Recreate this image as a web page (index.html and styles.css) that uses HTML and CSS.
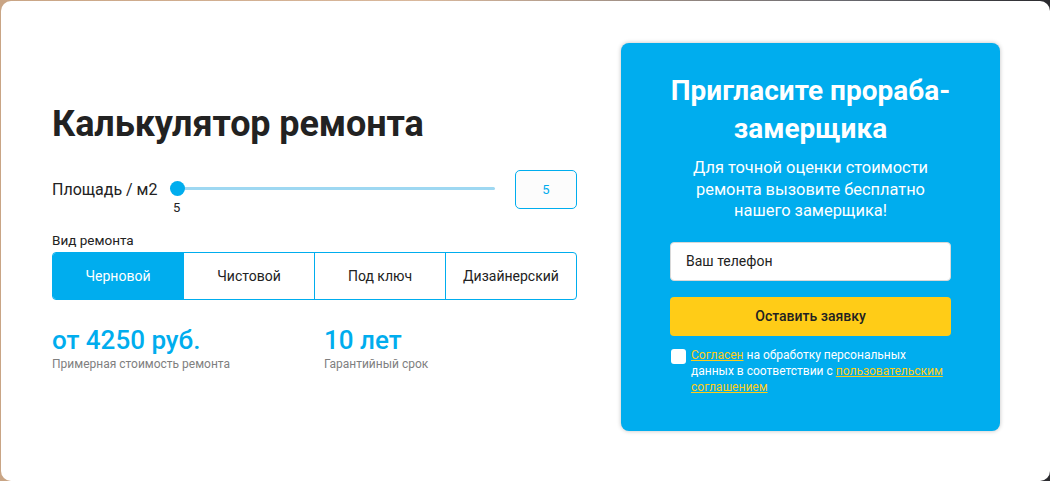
FILE: index.html
```html
<!DOCTYPE html>
<html lang="ru">
<head>
<meta charset="utf-8">
<title>Калькулятор ремонта</title>
<link rel="stylesheet" href="styles.css">
</head>
<body>
<div class="card">
  <section class="calc">
    <h1 class="calc-title">Калькулятор ремонта</h1>
    <div class="area-row">
      <span class="area-label">Площадь / м2</span>
      <div class="slider">
        <div class="track"></div>
        <div class="thumb"></div>
        <span class="thumb-value">5</span>
      </div>
      <div class="area-input">5</div>
    </div>
    <div class="type-label">Вид ремонта</div>
    <div class="segments">
      <div class="seg active">Черновой</div>
      <div class="seg">Чистовой</div>
      <div class="seg">Под ключ</div>
      <div class="seg">Дизайнерский</div>
    </div>
    <div class="results">
      <div class="result result-price">
        <div class="result-value">от 4250 руб.</div>
        <div class="result-caption">Примерная стоимость ремонта</div>
      </div>
      <div class="result">
        <div class="result-value">10 лет</div>
        <div class="result-caption">Гарантийный срок</div>
      </div>
    </div>
  </section>
  <aside class="panel">
    <h2 class="panel-title">Пригласите прораба-замерщика</h2>
    <p class="panel-text">Для точной оценки стоимости ремонта вызовите бесплатно нашего замерщика!</p>
    <div class="phone">Ваш телефон</div>
    <div class="submit">Оставить заявку</div>
    <div class="agree">
      <span class="checkbox"></span>
      <span class="agree-text"><a class="link">Согласен</a> на обработку персональных данных в соответствии с <a class="link">пользовательским соглашением</a></span>
    </div>
  </aside>
</div>
</body>
</html>
```
FILE: styles.css
```css
html, body {
  margin: 0;
  height: 100%;
}
body {
  background: linear-gradient(90deg, #c9a585 0%, #d9b89c 40%, #6a6a70 80%, #2a2a2e 100%);
  font-family: Roboto, "Noto Sans", sans-serif;
  color: #222;
  overflow: hidden;
}
.card {
  box-sizing: border-box;
  height: 480px;
  margin: 1px 0 0 1px;
  background: #fff;
  border-radius: 10px;
  display: flex;
  align-items: flex-start;
  padding: 42px 50px 0 51px;
  gap: 44px;
}
.calc {
  width: 525px;
  padding-top: 58px;
}
.calc-title {
  margin: 0;
  font-size: 36px;
  font-weight: 700;
  line-height: 46px;
  color: #222;
  letter-spacing: -0.1px;
}
.area-row {
  display: flex;
  align-items: center;
  margin-top: 23px;
  height: 38px;
}
.area-label {
  font-size: 16px;
  width: 118px;
  color: #222;
}
.slider {
  position: relative;
  width: 325px;
  height: 38px;
}
.track {
  position: absolute;
  left: 0;
  right: 0;
  top: 17px;
  height: 3px;
  background: #9ed8f2;
  border-radius: 2px;
}
.thumb {
  position: absolute;
  left: 0;
  top: 11px;
  width: 15px;
  height: 15px;
  border-radius: 50%;
  background: #00adee;
}
.thumb-value {
  position: absolute;
  left: 3px;
  top: 30px;
  font-size: 13px;
  line-height: 15px;
  color: #222;
}
.area-input {
  margin-left: auto;
  box-sizing: border-box;
  width: 62px;
  height: 39px;
  border: 1px solid #00adee;
  border-radius: 5px;
  background: #fcfcfc;
  color: #00adee;
  font-size: 13px;
  display: flex;
  align-items: center;
  justify-content: center;
}
.type-label {
  margin-top: 24px;
  font-size: 13.5px;
  line-height: 16px;
  color: #222;
}
.segments {
  margin-top: 4px;
  display: flex;
  height: 48px;
  border: 1px solid #00adee;
  border-radius: 4px;
  box-sizing: border-box;
  overflow: hidden;
}
.seg {
  flex: 1;
  display: flex;
  align-items: center;
  justify-content: center;
  font-size: 14px;
  color: #222;
  border-left: 1px solid #00adee;
}
.seg:first-child {
  border-left: none;
}
.seg.active {
  background: #00adee;
  color: #fff;
}
.results {
  display: flex;
  margin-top: 25px;
}
.result-price {
  width: 272px;
}
.result-value {
  font-size: 26px;
  font-weight: 500;
  line-height: 30px;
  color: #00adee;
}
.result-caption {
  margin-top: 1px;
  font-size: 12px;
  line-height: 16px;
  color: #7f7f7f;
}
.panel {
  box-sizing: border-box;
  width: 379px;
  height: 388px;
  background: #00adee;
  border-radius: 8px;
  box-shadow: 0 0 4px rgba(0, 0, 0, 0.25);
  padding: 29px 40px 0 40px;
  color: #fff;
  text-align: center;
}
.panel-title {
  margin: 0;
  font-size: 28px;
  font-weight: 700;
  line-height: 38px;
}
.panel-text {
  margin: 9px 19px 0;
  font-size: 16.4px;
  line-height: 21.5px;
}
.phone {
  margin: 20px 9px 0;
  box-sizing: border-box;
  height: 39px;
  background: #fff;
  border-radius: 4px;
  border: 1px solid #d8d8d8;
  color: #222;
  font-size: 14px;
  text-align: left;
  padding-left: 15px;
  display: flex;
  align-items: center;
}
.submit {
  margin: 16px 9px 0;
  height: 39px;
  background: #ffcc17;
  border-radius: 4px;
  color: #222;
  font-size: 14px;
  font-weight: 500;
  display: flex;
  align-items: center;
  justify-content: center;
}
.agree {
  margin: 11px 9px 0;
  display: flex;
  align-items: flex-start;
  text-align: left;
}
.checkbox {
  flex: none;
  width: 15px;
  height: 15px;
  background: #fff;
  border-radius: 3px;
  margin: 2px 5px 0 1px;
}
.agree-text {
  font-size: 12px;
  line-height: 16px;
}
.link {
  color: #ffcc17;
  text-decoration: underline;
}
```
